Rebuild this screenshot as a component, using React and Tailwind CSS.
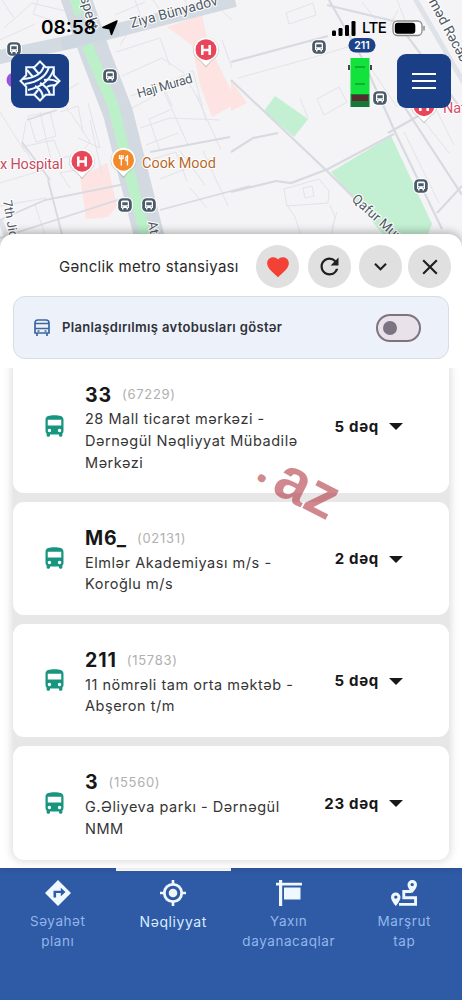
import { useState } from 'react';
import { MdFavorite, MdRefresh, MdExpandMore, MdClose } from 'react-icons/md';

const ROUTES = [
  { number: '33', code: '67229', lines: ['28 Mall ticarət mərkəzi -', 'Dərnəgül Nəqliyyat Mübadilə', 'Mərkəzi'], eta: '5 dəq' },
  { number: 'M6_', code: '02131', lines: ['Elmlər Akademiyası m/s -', 'Koroğlu m/s'], eta: '2 dəq' },
  { number: '211', code: '15783', lines: ['11 nömrəli tam orta məktəb -', 'Abşeron t/m'], eta: '5 dəq' },
  { number: '3', code: '15560', lines: ['G.Əliyeva parkı - Dərnəgül', 'NMM'], eta: '23 dəq' },
];

const STOPS = [[14, 49], [110, 76], [319, 47], [380, 98], [421, 186], [125, 205], [149, 205]];

function StopPin({ x, y }) {
  return (
    <g transform={`translate(${x} ${y})`}>
      <rect x="-7.8" y="-7.8" width="15.6" height="15.6" rx="5.5" fill="#fff" />
      <rect x="-6.8" y="-6.8" width="13.6" height="13.6" rx="4.5" fill="#4b5b6a" />
      <path fill="#fff" fillRule="evenodd" d="M-4-3Q-4-4.5-2.5-4.5h5Q4-4.5 4-3v6h-1v1.5h-1.5V3h-3v1.5H-3V3h-1zM-2.7-2.7v3h5.4v-3zM-2.8 1.2v1h1v-1zM1.8 1.2v1h1v-1z" />
    </g>
  );
}

function PlacePin({ x, y, color, children }) {
  return (
    <g transform={`translate(${x} ${y})`}>
      <path d="M-12.8 0a12.8 12.8 0 1 1 25.6 0c0 5-2.6 8-7.3 11.3L0 17.5l-5.5-6.2C-10.2 8-12.8 5-12.8 0z" fill="#777" opacity=".35" />
      <path d="M-12.3-.5a12.3 12.3 0 1 1 24.6 0c0 5-2.6 8-7 11L0 16l-5.3-5.5c-4.4-3-7-6-7-11z" fill="#fff" />
      <circle cy="-.3" r="10.5" fill={color} />
      {children}
    </g>
  );
}

const hospital = <path d="M-3.7-5v10M3.7-5v10M-3.7 0h7.4" stroke="#fff" strokeWidth="2.5" fill="none" />;

function CityMap() {
  return (
    <svg width="462" height="250" viewBox="0 0 462 250" className="block" fontFamily="Roboto, 'Liberation Sans', sans-serif">
      <rect width="462" height="250" fill="#f4f3f5" />
      <g fill="#fde4e2">
        <path d="M167 27l35-12 6 28 29 60-25 14-12-32-8-40z" />
        <path d="M80 177l27-14 10 43-9 11-22 2z" />
        <path d="M231 80l16 23-16 8z" />
      </g>
      <g fill="#c3efd2">
        <path d="M264 111l11-15 33 23-14 18z" />
        <path d="M331 172l60-36 41 88-10 26h-26z" />
      </g>
      <g fill="none" stroke="#e3e3e9" strokeWidth="1">
        <path d="M4 28l28-25 42 10M14 18L2 0M0 40l35-16M38 0l-5 14 30 10M69 112l-10-17 20-12M88 103l12 45-22-10M40 112l12 52M0 112l25 40M28 116l22-4 6 24-20 6zM60 112l18-6 5 26" />
        <path d="M26 122l-4 22 14 24M70 112l20 30-13 16M47 175l14 56M0 183l50-15M0 206l46-8M70 188l-10-15 20-4M22 147l32-7 7 18 20-4M90 120l12 54M35 205l15 45" />
        <path d="M120 45l8-12 32-10M116 52l44-14 10 28M122 76l40-18 22 15M131 96l31-13 10 23M130 109l23-12M160 83l28 62M170 110l-21 9 11 32M171 81l22-10 13 50M196 95l25 55M140 128l30-10 50 2M146 145l32-12M150 160l26-8 11 29M160 179l50-20M180 151l25 34" />
        <path d="M115 15l30-13M135 0l10 28M153 0l12 17M185 0l5 17M183 75l20 30M222 40l10 28M210 0l22 20M190 188l17 20M203 151l25 55" />
        <path d="M286 13l27-10 3 12-27 9zM317 99l22-12 8 15-23 13zM238 78l73-20 60-18M372 70l25 37M362 2l14 18M397 0l10 25M404 132l35 71M419 115l30 38M434 105l20 40M398 10l-8 15M300 98l8 20" />
        <path d="M284 189l35-10 10 12-1 12-41 3zM303 188l9-2 2 10-9 2zM287 205l8 12 8 25M330 205l5 12-4 20M337 212l-5 16" />
      </g>
      <g fill="none" stroke="#d9dae1">
        <path strokeWidth="2.2" d="M231 62l97-26M231 192l45-11 15 2 37-14 66-35" />
        <path strokeWidth="2.2" d="M231 80l97 92 60 60M329 0l33 58 34 76 46 95M327 5l70 17 65 88M231 152l22-14 25-5M388 133l50-28M437 213l25-27M400 100l62 95" />
        <path strokeWidth="1.8" d="M0 220l45-20 90-18M48 180l18 70M0 238l130-42M150 152l80-15M160 210l90-24M27 120l30-10M22 142l28 38" />
      </g>
      <g fill="none">
        <path stroke="#d3dae1" strokeWidth="14" d="M-5 58L80 40 134 26 235 0" />
        <path stroke="#d3d9e0" strokeWidth="30" d="M75-5l20 58 23 60 36 142" />
        <path stroke="#bbf0c8" strokeWidth="11" d="M74-5l6 19M87 45l26 60 37 150" />
        <path stroke="#cdd7df" strokeWidth="13" d="M62 44l56-15" />
        <path stroke="#dfe2e8" strokeWidth="5" d="M413-5l55 95M0 220l12 30" />
      </g>
      <circle cx="14" cy="80" r="7.5" fill="#9b51e0" />
      {STOPS.map(([x, y]) => <StopPin key={`${x}-${y}`} x={x} y={y} />)}
      <PlacePin x={206} y={50} color="#e8475b">{hospital}</PlacePin>
      <PlacePin x={82} y={161.5} color="#e8475b">{hospital}</PlacePin>
      <PlacePin x={424} y={106} color="#e8475b">{hospital}</PlacePin>
      <PlacePin x={123.5} y={160.5} color="#f4892a">
        <path d="M-4-5.5v4M-2.2-5.5v4M-.4-5.5v4M-4-2h3.6M-2.2-2v7M4-5.5v10.5M4-5C2-4 2-1 2.5 0H4" stroke="#fff" strokeWidth="1.3" fill="none" />
      </PlacePin>
      <g stroke="#fff" strokeWidth="2.2" strokeLinejoin="round" paintOrder="stroke" fill="#505a66" fontSize="13">
        <text transform="translate(131.5 28) rotate(-15)" textLength="90" fontSize="14">Ziya Bünyadov</text>
        <text transform="translate(138.5 98) rotate(-16)" textLength="57">Haji Murad</text>
        <text transform="translate(78 -10) rotate(74)" fontSize="14">ospekt</text>
        <text transform="translate(425 -5) rotate(62)" fontSize="14">əməd Rəcəbli</text>
        <text transform="translate(351 200) rotate(42)" fontSize="13.5">Qafur Muradov</text>
        <text transform="translate(3 201) rotate(80)" fontSize="12.5">7th Jidir</text>
        <text transform="translate(148 222) rotate(80)" fontSize="13">Atatürk</text>
        <text x="0" y="168.5" fontSize="14.5" textLength="63" fill="#c54b61">x Hospital</text>
        <text x="142" y="167.5" fontSize="14.5" textLength="74" fill="#b76a2b">Cook Mood</text>
        <text x="443" y="113" fontSize="14.5" fill="#d8506a">National</text>
      </g>
      {/* live bus */}
      <rect x="348.5" y="38" width="27" height="14.5" rx="7.25" fill="#1c4289" />
      <text x="362" y="49" textAnchor="middle" fontFamily="Inter, sans-serif" fontWeight="600" fontSize="10.5" fill="#fff">211</text>
      <path d="M349 65v5M371 65v5" stroke="#333" strokeWidth="1.8" />
      <path d="M350.5 58h19v36h-19z" fill="#11e33c" />
      <path d="M350.5 94h19v13h-19z" fill="#157a38" />
      <path d="M352 95h16v6h-16z" fill="#572c31" />
      <path d="M355 67h10M355 84h10" stroke="#087d27" />
    </svg>
  );
}

function StatusBar() {
  return (
    <div className="absolute inset-x-0 top-[17px] flex h-[22px] items-center pr-[36px] pl-[41px] text-black">
      <span className="w-[57px] text-[19px] leading-[22px] font-semibold">08:58</span>
      <svg width="16" height="16" viewBox="0 0 16 16" className="ml-[4px]">
        <path d="M15 1L9.5 14.5 7.8 8.7 1 7.5z" fill="#000" stroke="#000" strokeWidth="1.5" strokeLinejoin="round" />
      </svg>
      <svg width="24" height="15" viewBox="0 0 24 15" className="ml-auto">
        <rect x="0" y="9.5" width="4" height="5.5" rx="1.2" />
        <rect x="6.5" y="7" width="4" height="8" rx="1.2" />
        <rect x="13" y="4" width="4" height="11" rx="1.2" />
        <rect x="19.5" y="0" width="4" height="15" rx="1.2" />
      </svg>
      <span className="ml-[6px] w-[25px] text-[15px] font-medium tracking-[-0.6px]">LTE</span>
      <svg width="34" height="17" viewBox="0 0 34 17" className="ml-[5px]">
        <rect x="1" y="1" width="29" height="14.5" rx="4.5" fill="#fff" stroke="#8b8b8b" strokeWidth="1.3" />
        <rect x="2.8" y="2.8" width="20.5" height="11" rx="3" />
        <path d="M32 6v4.5" stroke="#888" strokeWidth="1.5" />
      </svg>
    </div>
  );
}

function Emblem() {
  return (
    <svg width="44" height="44" viewBox="-22 -22 44 44" fill="none" stroke="#eff9ff">
      <path strokeWidth="2" d="M0-19.5L5.7-13.8H13.8V-5.7L19.5 0 13.8 5.7V13.8H5.7L0 19.5-5.7 13.8H-13.8V5.7L-19.5 0-13.8-5.7V-13.8H-5.7z" />
      {/* woven ribbons */}
      <g strokeWidth="2.1">
        <path d="M4-15C2-8-5-3-17-2" />
        <path d="M9-14C6-4-2 1-15 3" />
        <path d="M14-12C10-1 2 6-12 9" />
        <path d="M-13-11L-7-4M-7-14L-1-7" />
        <path d="M-5 5C0 8 3 12 3 17M0 2C6 5 9 9 10 14" />
        <path d="M4-1C9-2 13-2 18 1M7 6C10 4 13 4 16 4M-6 14L-2 9" />
      </g>
    </svg>
  );
}

function RoundButton({ label, children }) {
  return (
    <button aria-label={label} className="flex size-[43px] shrink-0 items-center justify-center rounded-full bg-[#e0e0e0] text-[#202020]">
      {children}
    </button>
  );
}

function PlannedBusIcon() {
  return (
    <svg width="16" height="18" viewBox="0 0 16 18" fill="none" stroke="#3d659f" strokeWidth="1.7">
      <path d="M1 14V4Q1 1 4 1h8q3 0 3 3v10zM1 4.5h14M1 9.5h14M3 14v3M13 14v3" />
      <path d="M3.5 12h2M10.5 12h2" />
    </svg>
  );
}

function BusIcon() {
  return (
    <svg viewBox="0 0 24 24" fill="currentColor" className="size-[27px] shrink-0 text-[#18957f]">
      <path d="M4 16c0 .88.39 1.67 1 2.22V20c0 .55.45 1 1 1h1c.55 0 1-.45 1-1v-1h8v1c0 .55.45 1 1 1h1c.55 0 1-.45 1-1v-1.78c.61-.55 1-1.34 1-2.22V6c0-3.5-3.58-4-8-4s-8 .5-8 4v10zm3.5 1c-.83 0-1.5-.67-1.5-1.5S6.67 14 7.5 14s1.5.67 1.5 1.5S8.33 17 7.5 17zm9 0c-.83 0-1.5-.67-1.5-1.5s.67-1.5 1.5-1.5 1.5.67 1.5 1.5-.67 1.5-1.5 1.5zm1.5-6H6V6h12v5z" />
    </svg>
  );
}

function RouteCard({ route }) {
  return (
    <li className="flex items-center rounded-[11px] bg-white pr-[46px] pl-[27.5px]">
      <BusIcon />
      <div className="ml-[17.5px] min-w-0 flex-1 pt-[24px] pb-[20px] whitespace-nowrap">
        <div className="flex h-[25px] items-center gap-[10px]">
          <span className="text-[19.5px] font-bold tracking-[0.9px] text-[#171717]">{route.number}</span>
          <span className="text-[13px] tracking-[0.7px] text-[#b0b0b0]">({route.code})</span>
        </div>
        <p className="mt-[0.5px] text-[14.5px] leading-[21.7px] tracking-[0.53px] text-[#353535]">
          {route.lines.map((line) => <span key={line} className="block">{line}</span>)}
        </p>
      </div>
      <button className="mt-[1.5px] flex shrink-0 items-center gap-[10px] text-[15px] font-bold tracking-[0.7px] text-[#181818]">
        {route.eta}
        <svg width="14" height="7" viewBox="0 0 14 7"><path d="M0 0h14L7 7z" fill="currentColor" /></svg>
      </button>
    </li>
  );
}

const TABS = [
  {
    lines: ['Səyahət', 'planı'],
    icon: <path fillRule="evenodd" d="M13 0L26 13 13 26 0 13zM8.5 17.5h2.6v-4.5h4.7v3.2L20.5 12 15.8 7.7v3H8.5z" />,
  },
  {
    lines: ['Nəqliyyat'],
    icon: (
      <>
        <circle cx="13" cy="13" r="8.7" fill="none" stroke="currentColor" strokeWidth="2.8" />
        <circle cx="13" cy="13" r="4.3" />
        <path d="M11.7 0h2.6v5h-2.6zM11.7 21h2.6v5h-2.6zM0 11.7h5v2.6H0zM21 11.7h5v2.6h-5z" />
      </>
    ),
  },
  {
    lines: ['Yaxın', 'dayanacaqlar'],
    icon: <path d="M3 0h3.2v2.7H26v2.8H6.2V26H3V5.5H0V2.7h3zM8 7.5h16.5v12H8z" />,
  },
  {
    lines: ['Marşrut', 'tap'],
    icon: (
      <>
        <path fillRule="evenodd" d="M4.8 12.5a4.7 4.7 0 0 1 4.7 4.7c0 3.5-4.7 8.8-4.7 8.8S0 20.7 0 17.2a4.7 4.7 0 0 1 4.8-4.7zm0 2.9a1.7 1.7 0 1 0 0 3.4 1.7 1.7 0 0 0 0-3.4zM21.2 0A4.7 4.7 0 0 1 26 4.7c0 3.5-4.8 8.3-4.8 8.3s-4.7-4.8-4.7-8.3A4.7 4.7 0 0 1 21.2 0zm0 2.9a1.7 1.7 0 1 0 0 3.4 1.7 1.7 0 0 0 0-3.4z" />
        <path fill="none" stroke="currentColor" strokeWidth="2.9" d="M20.5 11.5h-7.7v6.3h11.8v6.6H8" />
      </>
    ),
  },
];

export default function App() {
  const [planned, setPlanned] = useState(false);
  const active = 1;

  return (
    <div className="relative flex h-[1000px] w-[462px] flex-col overflow-hidden bg-white font-['Inter','Noto_Sans',sans-serif]">
      <header className="relative h-[234px] shrink-0">
        <CityMap />
        <StatusBar />
        <button aria-label="Ana səhifə" className="absolute top-[54px] left-[11px] flex h-[54px] w-[58px] items-center justify-center rounded-[9px] bg-[#1b3f87]">
          <Emblem />
        </button>
        <button aria-label="Menyu" className="absolute top-[54px] left-[397px] flex size-[54px] flex-col items-center justify-center gap-[4.5px] rounded-[9px] bg-[#1b3f87]">
          <span className="h-[2.5px] w-[24px] bg-white" />
          <span className="h-[2.5px] w-[24px] bg-white" />
          <span className="h-[2.5px] w-[24px] bg-white" />
        </button>
      </header>

      <main className="relative flex h-[634px] shrink-0 flex-col rounded-t-[14px] bg-white shadow-[0_-2px_9px_rgba(0,0,0,0.28)]">
        <div className="mt-[11px] flex h-[43px] shrink-0 items-center pr-[11px] pl-[59px]">
          <h1 className="mt-[1px] flex-1 text-[15px] tracking-[0.3px] whitespace-nowrap text-[#292929]">Gənclik metro stansiyası</h1>
          <div className="grid w-[195px] grid-cols-[52px_51px_49px_43px]">
            <RoundButton label="Seçilmiş"><MdFavorite className="size-[26px] text-[#f34235]" /></RoundButton>
            <RoundButton label="Yenilə"><MdRefresh className="size-[27px]" /></RoundButton>
            <RoundButton label="Yığ"><MdExpandMore className="size-[25px]" /></RoundButton>
            <RoundButton label="Bağla"><MdClose className="size-[26px]" /></RoundButton>
          </div>
        </div>

        <div className="mx-[13px] mt-[8px] flex h-[63px] shrink-0 items-center rounded-[12px] border border-[#d6dde7] bg-[#edf1fa] pr-[27px] pl-[20px]">
          <PlannedBusIcon />
          <span className="mt-[1px] ml-[12px] flex-1 text-[13px] font-semibold tracking-[0.35px] text-[#303238]">Planlaşdırılmış avtobusları göstər</span>
          <button
            role="switch"
            aria-checked={planned}
            aria-label="Planlaşdırılmış"
            onClick={() => setPlanned((p) => !p)}
            className={`flex h-[28px] w-[45px] items-center rounded-full border-2 border-[#7c7480] bg-[#e9e2eb] px-[5px] ${planned ? 'justify-end' : 'justify-start'}`}
          >
            <span className="size-[14px] rounded-full bg-[#7c7480]" />
          </button>
        </div>

        <div className="mt-[9px] h-[500px] overflow-hidden px-[13px]">
          <ul className="-mt-[9px] grid grid-rows-[134px_113px_113px_114px] gap-[9px] rounded-[11px] bg-[#e7e7e7] shadow-[0_0_8px_2px_rgba(0,0,0,0.13)]">
            {ROUTES.map((route) => <RouteCard key={route.number} route={route} />)}
          </ul>
        </div>
        <div className="pointer-events-none absolute top-[219px] left-[257px] flex rotate-[27deg] items-baseline gap-[7px] font-['Liberation_Sans',Arial,sans-serif] text-[61px] leading-[61px] font-bold text-[#b13943]/60">
          <span className="relative -top-[5px] font-['Noto_Sans',sans-serif] text-[46px] leading-[46px]">.</span>
          <span>az</span>
        </div>
      </main>

      <nav className="grid h-[132px] shrink-0 grid-cols-4 bg-[#2f5aa5]">
        {TABS.map((tab, i) => (
          <button
            key={tab.lines[0]}
            className={`flex flex-col items-center border-t-[3px] pt-[9px] ${i === active ? 'border-white text-[14px] text-[#d8edff]' : 'border-transparent text-[13.5px] text-[#91b7ea]'}`}
          >
            <svg width="26" height="26" viewBox="0 0 26 26" fill="currentColor" className="text-[#f0f8ff]">{tab.icon}</svg>
            <span className={`leading-[20.5px] tracking-[0.57px] ${i === active ? 'mt-[6px]' : 'mt-[4.5px]'}`}>
              {tab.lines.map((line) => <span key={line} className="block">{line}</span>)}
            </span>
          </button>
        ))}
      </nav>
    </div>
  );
}
